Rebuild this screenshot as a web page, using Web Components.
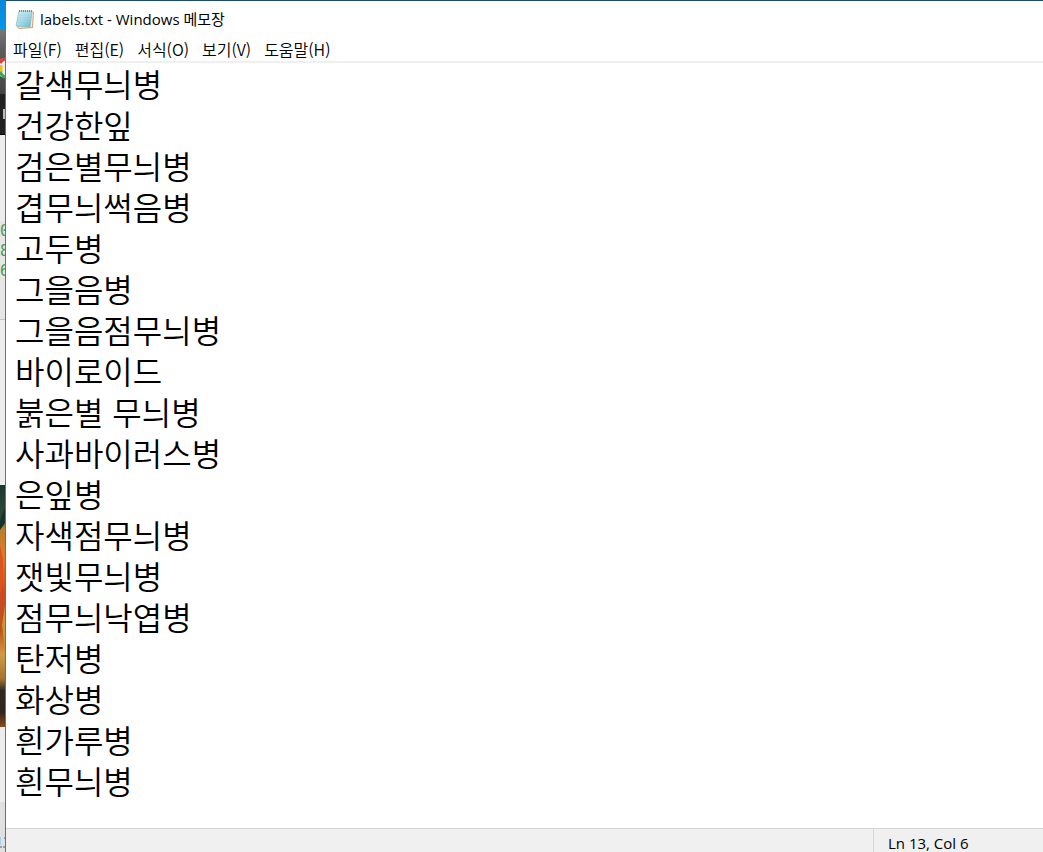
<!DOCTYPE html>
<html lang="ko">
<head>
<meta charset="utf-8">
<title>labels.txt - Windows 메모장</title>
<style>
html, body { height: 100%; margin: 0; }
body { overflow: hidden; font-family: "Noto Sans CJK KR", sans-serif; font-weight: 350; color: #000; }
</style>
</head>
<body>
<np-desktop>
  <np-backdrop></np-backdrop>
  <np-window>
    <np-titlebar slot="title">labels.txt - Windows 메모장</np-titlebar>
    <np-menubar slot="menu">
      <np-menu>파일(F)</np-menu>
      <np-menu>편집(E)</np-menu>
      <np-menu>서식(O)</np-menu>
      <np-menu>보기(V)</np-menu>
      <np-menu>도움말(H)</np-menu>
    </np-menubar>
    <np-editor></np-editor>
    <np-statusbar slot="status">Ln 13, Col 6</np-statusbar>
  </np-window>
</np-desktop>
<script>
function define(name, html) {
  const tpl = document.createElement('template');
  tpl.innerHTML = html;
  customElements.define(name, class extends HTMLElement {
    constructor() {
      super();
      this.attachShadow({ mode: 'open' }).append(tpl.content.cloneNode(true));
    }
  });
}

define('np-desktop', `
<style>
:host { display: grid; grid-template-columns: 5px minmax(0, 1fr); height: 100vh; }
</style><slot></slot>`);

define('np-backdrop', `
<style>
:host { display: flex; flex-direction: column; overflow: hidden; background: #ececec; }
div { flex: none; overflow: hidden; }
svg { display: block; }
.sky { height: 30px; background: linear-gradient(#0c86d6, #0795ea); }
.tabs { height: 64px; background: linear-gradient(#777 0, #5c5c5c 20px, #444); }
.dark { height: 40px; background: #1f2123; border-bottom: 1px solid #000; }
.page { height: 86px; background: #ececec; }
.code { height: 98px; background: #e6e6e6; border-bottom: 1px solid #c4c4c4; font: 15px/20px "DejaVu Sans Mono", monospace; color: #4c9a50; }
.code span { display: block; }
.blank { height: 165px; background: #ececec; }
.photo { height: 242px; }
.gap { height: 75px; background: #ececec; }
.foot { flex: 1; background: #e0e0e0; }
</style>
<div class="sky"></div>
<div class="tabs"><svg width="5" height="64"><circle cx="6" cy="38" r="10" fill="#e8eaed"/><path d="M0 33A8 8 0 0 1 5 29" stroke="#e33b2e" stroke-width="3" fill="none"/><path d="M0 35V42" stroke="#f5be1c" stroke-width="5"/><path d="M0 42Q2 46 5 47" stroke="#35a853" stroke-width="3" fill="none"/></svg></div>
<div class="dark"><svg width="5" height="40"><path d="M5 16H4V24H5" stroke="#bbb" stroke-width="2" fill="none"/></svg></div>
<div class="page"></div>
<div class="code"><span>0</span><span>8</span><span>6</span></div>
<div class="blank"></div>
<div class="photo"><svg width="5" height="242" viewBox="0 0 5 242">
<defs><linearGradient id="g" x2="0" y2="1"><stop offset="0" stop-color="#1b3833"/><stop offset=".13" stop-color="#314a36"/><stop offset=".18" stop-color="#ba7e2c"/><stop offset=".3" stop-color="#dd7d2c"/><stop offset=".44" stop-color="#cb4b22"/><stop offset=".6" stop-color="#bd5220"/><stop offset=".7" stop-color="#d19a42"/><stop offset=".8" stop-color="#a57431"/><stop offset=".85" stop-color="#2b2a23"/><stop offset=".94" stop-color="#33251a"/><stop offset="1" stop-color="#8c4a20"/></linearGradient></defs>
<rect width="5" height="242" fill="url(#g)"/><path d="M0 35L5 22V38L0 45Z" fill="#16342c"/><path d="M0 60L3 75V98L0 110Z" fill="#d9541f"/><path d="M5 120L2 140L5 165Z" fill="#c99a36"/></svg></div>
<div class="gap"></div>
<div class="foot"><svg width="5" height="50"><path d="M0 35H1V43H0Z" fill="#9fd3f3"/><path d="M0 45H2M4 36H5M3 45H5" stroke="#5d5d68"/></svg></div>`);

define('np-window', `
<style>
:host { display: flex; flex-direction: column; min-width: 0; background: #fff; border-left: 1px solid #6d7073; border-top: 1px solid #1b4b6c; }
</style>
<slot name="title"></slot><slot name="menu"></slot><slot></slot><slot name="status"></slot>`);

define('np-titlebar', `
<style>
:host { display: flex; flex: none; align-items: center; gap: 5px; height: 36px; padding-left: 9px; font: 400 15px/20px "Open Sans", "Noto Sans CJK KR", sans-serif; }
svg { display: block; flex: none; }
</style>
<svg width="20" height="22" viewBox="0 0 20 22">
<defs><linearGradient id="p" x1="0" y1="0" x2="1" y2="1"><stop offset="0" stop-color="#d9f1f6"/><stop offset=".5" stop-color="#a9dce8"/><stop offset="1" stop-color="#69b5cb"/></linearGradient></defs>
<path d="M16 3L19 4L18 20L4 21L2 19Z" fill="#c5ab7c"/>
<path d="M15 3L18 4L17 19L3 20Z" fill="#f1ead7"/>
<path d="M4 3H17L15 19L1 18Z" fill="url(#p)" stroke="#7baebb" stroke-width=".6"/>
<path d="M4 7H15M3.500 9.500H14.700M3.200 12H14.300M2.800 14.500H14" stroke="#8bcbda" stroke-width=".5"/>
<path d="M4.500 2V4M6.500 2V4M8.500 2V4M10.500 2V4M12.500 2V4M14.500 2V4M16.500 2V4" stroke="#888" stroke-width="1"/>
</svg><span><slot></slot></span>`);

define('np-menubar', `
<style>
:host { display: flex; flex: none; gap: 13px; height: 24px; padding-left: 7px; border-bottom: 2px solid #f0f0f0; font-size: 16px; }
</style><slot></slot>`);

define('np-menu', `
<style>
:host { display: block; }
button { display: block; margin: 0; padding: 0; border: 0; background: none; font: inherit; line-height: 24px; color: inherit; white-space: nowrap; }
</style><button type="button"><slot></slot></button>`);

define('np-editor', `
<style>
:host { display: flex; flex: 1; min-height: 0; }
textarea { flex: 1; min-width: 0; margin: 0; padding: 0 9px; border: 0; outline: 0; resize: none; overflow: hidden; background: #fff; color: #000; font: 350 32px/41px "Noto Sans CJK KR", sans-serif; }
</style>
<textarea aria-label="labels.txt" spellcheck="false">갈색무늬병
건강한잎
검은별무늬병
겹무늬썩음병
고두병
그을음병
그을음점무늬병
바이로이드
붉은별 무늬병
사과바이러스병
은잎병
자색점무늬병
잿빛무늬병
점무늬낙엽병
탄저병
화상병
흰가루병
흰무늬병</textarea>`);

define('np-statusbar', `
<style>
:host { display: flex; flex: none; justify-content: flex-end; height: 23px; border-top: 1px solid #d7d7d7; background: #f0f0f0; font: 400 15px/28px "Open Sans", sans-serif; }
div { width: 155px; padding-left: 14px; border-left: 1px solid #d7d7d7; }
</style><div><slot></slot></div>`);
</script>
</body>
</html>
